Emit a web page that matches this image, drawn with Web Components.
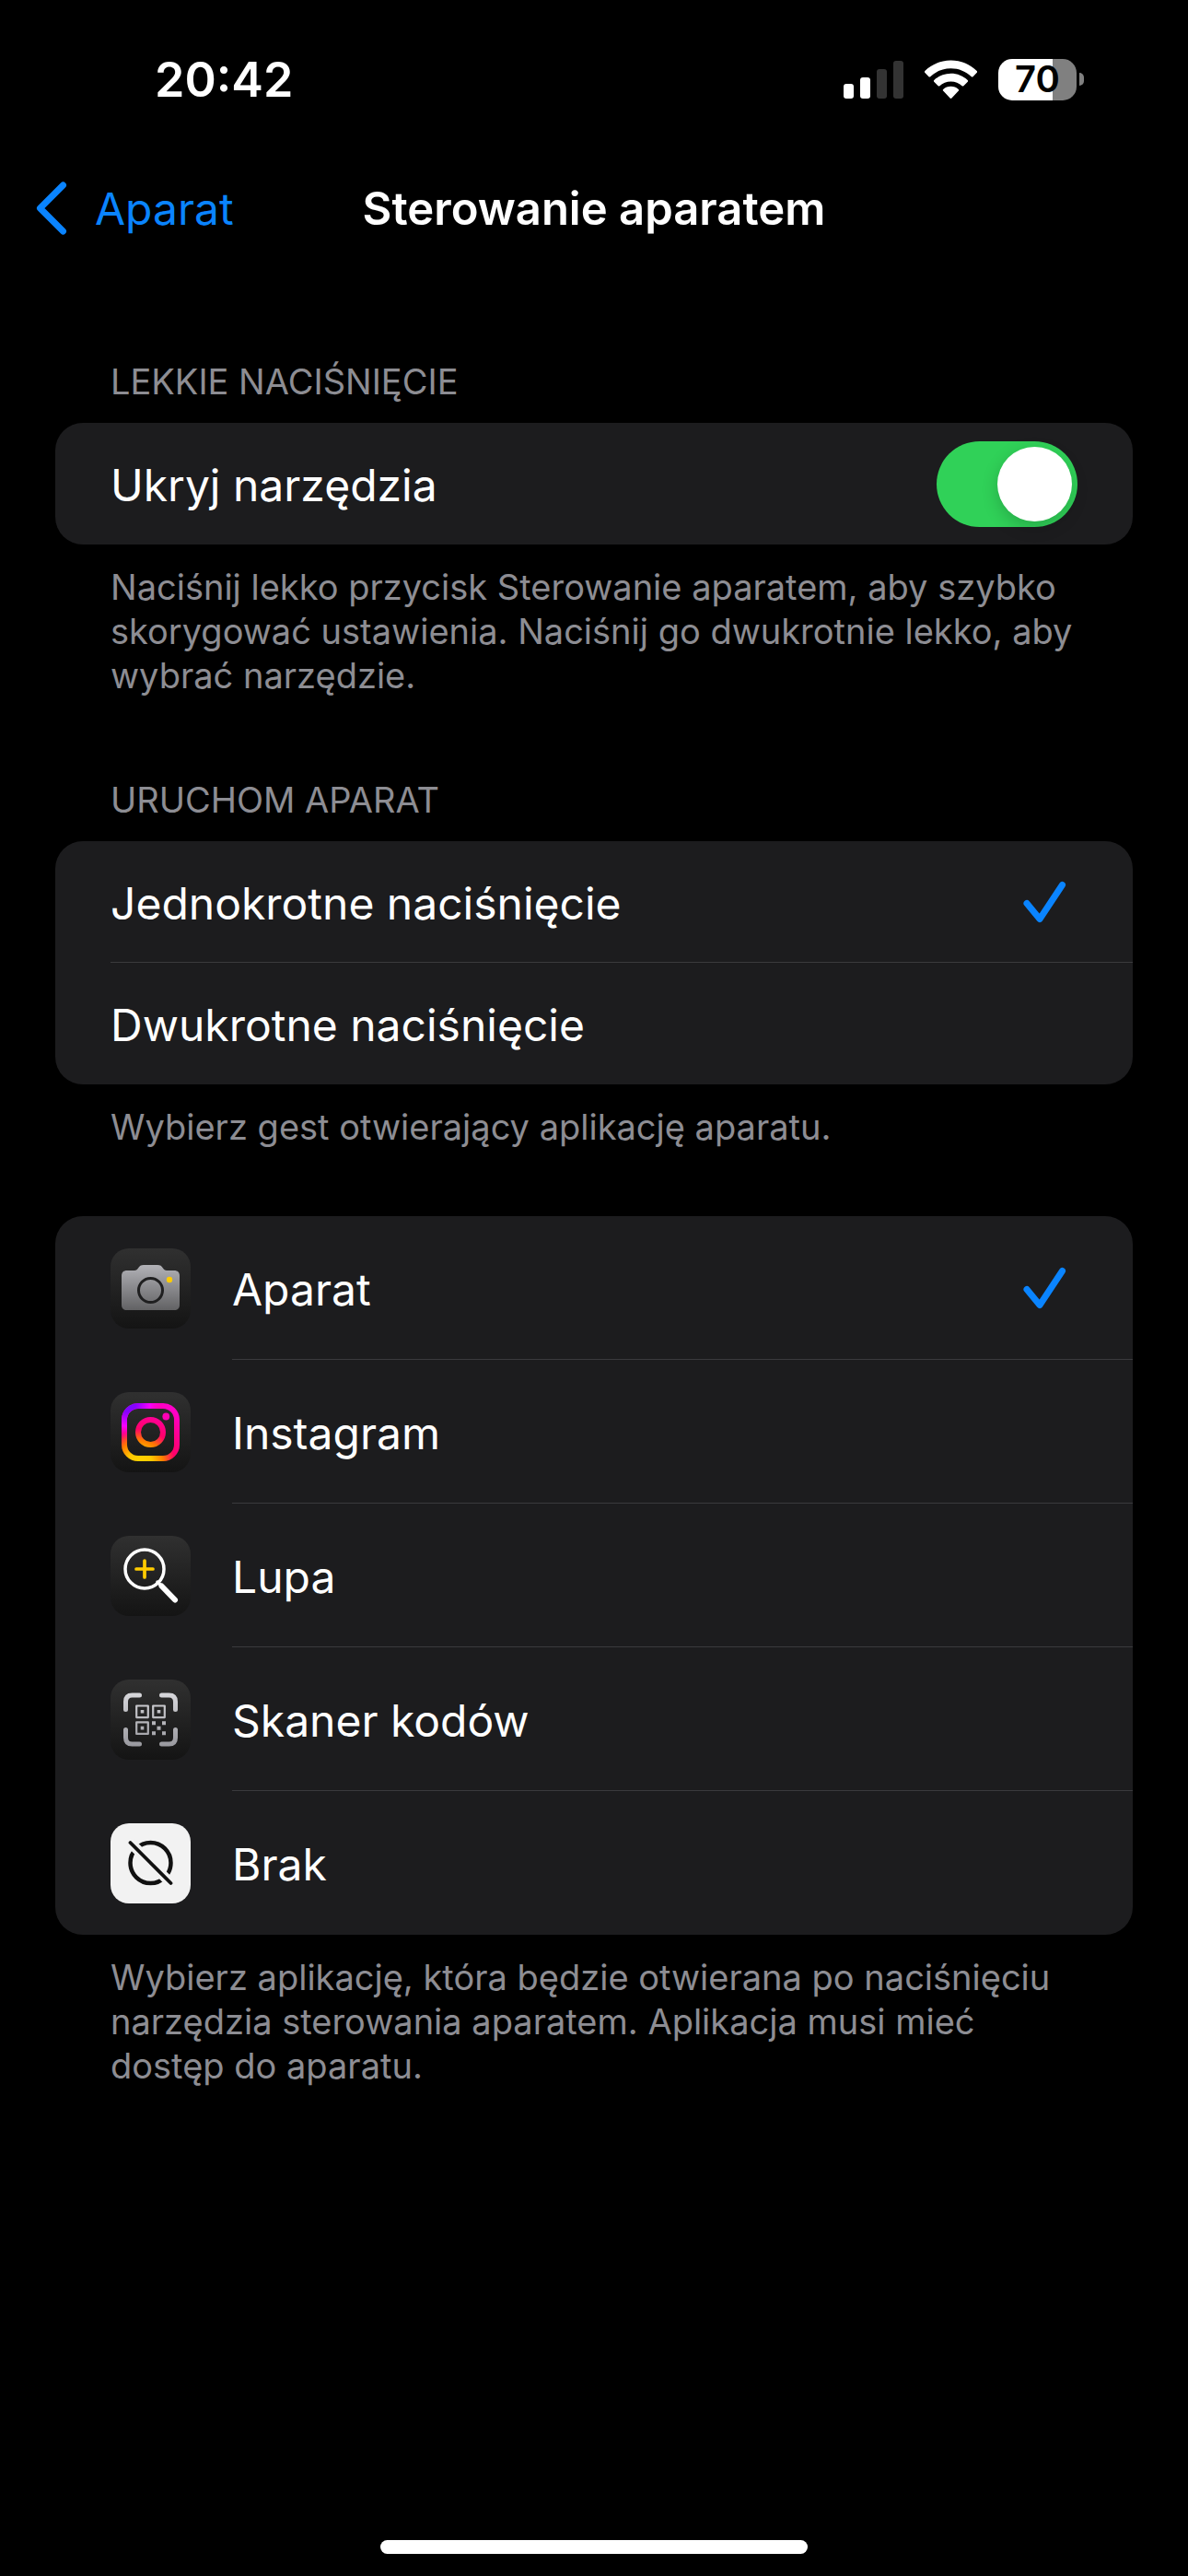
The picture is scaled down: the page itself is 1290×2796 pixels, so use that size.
<!DOCTYPE html>
<html lang="pl">
<head>
<meta charset="utf-8">
<meta name="viewport" content="width=device-width, initial-scale=1">
<title>Sterowanie aparatem</title>
<style>
    :root {
        --blue: #0a84ff;
        --green: #30d158;
        --card: #1c1c1e;
        --line: #3a3a3d;
        --muted: #8d8d93;
        --edge: 60px;
        --text: 48px;
        --small: 38px;
    }

    body {
        margin: 0;
        background: #000;
        color: #fff;
        font-family: Inter, "Liberation Sans", sans-serif;
        font-size: var(--text);
    }
</style>
</head>
<body>

<settings-screen>
    <status-bar slot="top" time="20:42" battery="70"></status-bar>
    <nav-bar slot="top" back="Aparat">Sterowanie aparatem</nav-bar>

    <settings-group heading="LEKKIE NACIŚNIĘCIE">
        <switch-row checked>Ukryj narzędzia</switch-row>
        <span slot="footer">Naciśnij lekko przycisk Sterowanie aparatem, aby szybko skorygować ustawienia. Naciśnij go dwukrotnie lekko, aby wybrać narzędzie.</span>
    </settings-group>

    <settings-group heading="URUCHOM APARAT">
        <choice-row checked>Jednokrotne naciśnięcie</choice-row>
        <choice-row>Dwukrotne naciśnięcie</choice-row>
        <span slot="footer">Wybierz gest otwierający aplikację aparatu.</span>
    </settings-group>

    <settings-group>
        <choice-row checked><app-icon slot="icon" name="camera"></app-icon>Aparat</choice-row>
        <choice-row><app-icon slot="icon" name="instagram"></app-icon>Instagram</choice-row>
        <choice-row><app-icon slot="icon" name="magnifier"></app-icon>Lupa</choice-row>
        <choice-row><app-icon slot="icon" name="scanner"></app-icon>Skaner kodów</choice-row>
        <choice-row><app-icon slot="icon" name="none"></app-icon>Brak</choice-row>
        <span slot="footer">Wybierz aplikację, która będzie otwierana po naciśnięciu narzędzia sterowania aparatem. Aplikacja musi mieć dostęp do aparatu.</span>
    </settings-group>
</settings-screen>

<script>
    class SettingsScreen extends HTMLElement {
        constructor() {
            super();
            this.attachShadow({ mode: 'open' });
        }

        connectedCallback() {
            this.shadowRoot.innerHTML = `
            <style>
                :host {
                    display: flex;
                    flex-direction: column;
                    min-height: 100vh;
                }

                main {
                    display: flex;
                    flex-direction: column;
                    gap: 73px;
                    padding: 98px var(--edge) 60px;
                }

                .home {
                    width: 36%;
                    height: 15px;
                    margin: auto auto 24px;
                    border-radius: 8px;
                    background: #fff;
                }
            </style>
            <slot name="top"></slot>
            <main><slot></slot></main>
            <div class="home"></div>`;
        }
    }

    class StatusBar extends HTMLElement {
        constructor() {
            super();
            this.attachShadow({ mode: 'open' });
        }

        connectedCallback() {
            const level = this.getAttribute('battery');
            this.shadowRoot.innerHTML = `
            <style>
                :host {
                    display: flex;
                    justify-content: space-between;
                    align-items: center;
                    height: 174px;
                    padding: 0 113px 2px 168px;
                    box-sizing: border-box;
                    font-weight: 600;
                    font-size: 52px;
                }

                .icons {
                    display: flex;
                    align-items: center;
                    gap: 23px;
                }

                svg {
                    display: block;
                }

                .battery {
                    display: flex;
                    align-items: center;
                    gap: 3px;
                }

                .cell {
                    display: flex;
                    justify-content: center;
                    align-items: center;
                    width: 85px;
                    height: 45px;
                    border-radius: 15px;
                    background: linear-gradient(90deg, #fff ${level}%, #808080 ${level}%);
                    color: #000;
                    font-size: 40px;
                    font-weight: 600;
                    line-height: 1;
                }

                .tip {
                    width: 5px;
                    height: 14px;
                    border-radius: 0 5px 5px 0;
                    background: #808080;
                }
            </style>
            <time>${this.getAttribute('time')}</time>
            <div class="icons">
                <svg width="65" height="43" viewBox="0 0 65 43">
                    <g fill="#fff">
                        <rect x="0" y="26" width="11" height="16" rx="3"/>
                        <rect x="18" y="19" width="11" height="23" rx="3"/>
                    </g>
                    <g fill="#333">
                        <rect x="36" y="10" width="11" height="32" rx="3"/>
                        <rect x="54" y="1" width="11" height="41" rx="3"/>
                    </g>
                </svg>
                <svg width="57" height="43" viewBox="0 0 57 43" fill="#fff">
                    <path d="M28.500 0.500C39.500 0.500 49.500 4.800 56.700 12c.6.6.6 1.200.1 1.800l-4.300 4.400c-.5.5-1.200.5-1.700 0C45 12.600 37.200 9.200 28.500 9.200S12 12.600 6.200 18.200c-.5.5-1.200.5-1.700 0L.2 13.800c-.5-.6-.5-1.200.1-1.800C7.500 4.800 17.500.5 28.500.5Z"/>
                    <path d="M28.500 14.700c7 0 13.400 2.700 18.200 7.200.6.6.6 1.200.1 1.800l-4.500 4.500c-.5.5-1.100.5-1.700 0-3.200-3-7.400-4.800-12.100-4.800s-8.900 1.800-12.100 4.800c-.6.5-1.200.5-1.700 0l-4.500-4.500c-.5-.6-.5-1.200.1-1.800 4.800-4.500 11.200-7.200 18.200-7.200Z"/>
                    <path d="M28.500 28.700c3.200 0 6.100 1.200 8.300 3.200.6.6.6 1.200.1 1.700l-7.500 7.900c-.6.6-1.200.6-1.800 0l-7.500-7.900c-.5-.5-.5-1.100.1-1.700 2.200-2 5.100-3.200 8.300-3.200Z"/>
                </svg>
                <div class="battery">
                    <div class="cell">${level}</div>
                    <div class="tip"></div>
                </div>
            </div>`;
        }
    }

    class NavBar extends HTMLElement {
        constructor() {
            super();
            this.attachShadow({ mode: 'open' });
        }

        connectedCallback() {
            this.shadowRoot.innerHTML = `
            <style>
                :host {
                    display: grid;
                    grid-template-columns: 1fr auto 1fr;
                    align-items: center;
                    height: 104px;
                    padding: 0 38px;
                }

                a {
                    display: flex;
                    align-items: center;
                    gap: 30px;
                    color: var(--blue);
                    text-decoration: none;
                }

                h1 {
                    margin: 0;
                    font-size: 49px;
                    font-weight: 600;
                }
            </style>
            <a href="#">
                <svg width="35" height="60" viewBox="0 0 35 60" fill="none" stroke="currentColor" stroke-width="7" stroke-linecap="round" stroke-linejoin="round">
                    <path d="M30.500 5 L5.500 30 L30.500 55"/>
                </svg>
                <span>${this.getAttribute('back')}</span>
            </a>
            <h1><slot></slot></h1>`;
        }
    }

    class SettingsGroup extends HTMLElement {
        constructor() {
            super();
            this.attachShadow({ mode: 'open' });
        }

        connectedCallback() {
            const heading = this.getAttribute('heading');
            this.shadowRoot.innerHTML = `
            <style>
                :host {
                    display: block;
                }

                h2,
                p {
                    margin: 0;
                    padding: 0 var(--edge);
                    color: var(--muted);
                    font-size: var(--small);
                    font-weight: 400;
                    line-height: 48px;
                }

                h2 {
                    padding-top: 14px;
                    padding-bottom: 21px;
                }

                p {
                    padding-top: 22px;
                }

                .card {
                    border-radius: 30px;
                    background: var(--card);
                    overflow: hidden;
                }
            </style>
            ${heading ? `<h2>${heading}</h2>` : ''}
            <div class="card"><slot></slot></div>
            <p><slot name="footer"></slot></p>`;

            // radios sit in separate shadow roots, so the group keeps one of them checked
            this.addEventListener('pick', (e) => {
                this.querySelectorAll('choice-row').forEach((row) => {
                    row.checked = row === e.target;
                });
            });
        }
    }

    class SwitchRow extends HTMLElement {
        constructor() {
            super();
            this.attachShadow({ mode: 'open' });
        }

        connectedCallback() {
            this.shadowRoot.innerHTML = `
            <style>
                :host {
                    display: block;
                }

                label {
                    display: flex;
                    justify-content: space-between;
                    align-items: center;
                    min-height: 132px;
                    padding: 0 var(--edge);
                }

                .text {
                    padding-top: 3px;
                }

                input {
                    appearance: none;
                    flex: none;
                    width: 153px;
                    height: 93px;
                    margin: 0;
                    padding: 6px;
                    box-sizing: border-box;
                    border-radius: 47px;
                    background: #39393d;
                }

                input::before {
                    content: "";
                    display: block;
                    width: 81px;
                    height: 81px;
                    border-radius: 50%;
                    background: #fff;
                    box-shadow: 0 6px 18px #00000030;
                }

                input:checked {
                    background: var(--green);
                }

                input:checked::before {
                    margin-left: auto;
                }
            </style>
            <label>
                <span class="text"><slot></slot></span>
                <input type="checkbox" role="switch" ${this.hasAttribute('checked') ? 'checked' : ''}>
            </label>`;
        }
    }

    class ChoiceRow extends HTMLElement {
        constructor() {
            super();
            this.attachShadow({ mode: 'open' });
        }

        set checked(value) {
            this.shadowRoot.querySelector('input').checked = value;
        }

        connectedCallback() {
            const icon = this.querySelector('[slot=icon]');
            this.shadowRoot.innerHTML = `
            <style>
                :host {
                    display: block;
                }

                label {
                    display: flex;
                    gap: 45px;
                    align-items: center;
                    padding-left: var(--edge);
                }

                .body {
                    flex: 1;
                    display: flex;
                    justify-content: space-between;
                    align-items: center;
                    box-sizing: border-box;
                    min-height: ${icon ? 156 : 132}px;
                    padding-right: 72px;
                    border-bottom: 1px solid var(--line);
                }

                .text {
                    padding-top: 3px;
                }

                :host(:nth-last-child(2)) .body {
                    border-color: transparent;
                }

                input {
                    position: absolute;
                    opacity: 0;
                }

                svg {
                    display: none;
                }

                input:checked + svg {
                    display: block;
                }
            </style>
            <label>
                <slot name="icon"></slot>
                <span class="body">
                    <span class="text"><slot></slot></span>
                    <input type="radio" ${this.hasAttribute('checked') ? 'checked' : ''}>
                    <svg width="48" height="48" viewBox="0 0 48 48" fill="none" stroke="#0a84ff" stroke-width="7" stroke-linecap="round" stroke-linejoin="round">
                        <path d="M5 25.500 L19 42.500 L43.500 5.500"/>
                    </svg>
                </span>
            </label>`;
            this.shadowRoot.querySelector('input').addEventListener('change', () => {
                this.dispatchEvent(new Event('pick', { bubbles: true }));
            });
        }
    }

    const drawings = {
        camera: `
            <linearGradient id="body" x1="0" y1="0" x2="0" y2="1">
                <stop offset="0" stop-color="#b2b2b7"/>
                <stop offset="1" stop-color="#626264"/>
            </linearGradient>
            <path fill="url(#body)" d="M18 24h8c2 0 3-1 4-2.500 1.500-2.500 3-3.500 6-3.500h15c3 0 4.500 1 6 3.500 1 1.500 2 2.500 4 2.500h8c4 0 6 2 6 6v31c0 4-2 6-6 6H18c-4 0-6-2-6-6V30c0-4 2-6 6-6Z"/>
            <circle cx="43.500" cy="45.500" r="13" fill="none" stroke="#1f1f20" stroke-width="3"/>
            <circle cx="64" cy="34" r="3.200" fill="#ffcc00"/>`,
        instagram: `
            <radialGradient id="warm" gradientUnits="userSpaceOnUse" cx="32" cy="78" r="68">
                <stop offset="0" stop-color="#ffd600"/>
                <stop offset=".2" stop-color="#ffc800"/>
                <stop offset=".38" stop-color="#ff7a00"/>
                <stop offset=".56" stop-color="#ff0069"/>
                <stop offset="1" stop-color="#ff00c8"/>
            </radialGradient>
            <radialGradient id="cold" gradientUnits="userSpaceOnUse" cx="18" cy="12" r="40">
                <stop offset="0" stop-color="#6a10ff"/>
                <stop offset=".25" stop-color="#8a00ff"/>
                <stop offset=".62" stop-color="#f800ff"/>
                <stop offset="1" stop-color="#ff00a0" stop-opacity="0"/>
            </radialGradient>
            <g fill="none" stroke="url(#warm)" stroke-width="6">
                <rect x="15" y="15" width="57" height="57" rx="15"/>
                <circle cx="43.500" cy="43.500" r="13.500"/>
                <circle cx="60.300" cy="26.500" r="3.900" fill="#ff00b4" stroke="none"/>
            </g>
            <g fill="none" stroke="url(#cold)" stroke-width="6">
                <rect x="15" y="15" width="57" height="57" rx="15"/>
            </g>`,
        magnifier: `
            <g fill="none" stroke="#fff" stroke-linecap="round">
                <circle cx="37" cy="36" r="21" stroke-width="3.500"/>
                <path stroke-width="3.500" d="M51 50l4 4"/>
                <path stroke-width="6" d="M55.500 54.500L70 69.500"/>
            </g>
            <path fill="none" stroke="#ffcc00" stroke-width="3.700" stroke-linecap="round" d="M37 27v18M28 36h18"/>`,
        scanner: `
            <linearGradient id="code" gradientUnits="userSpaceOnUse" x1="0" y1="14" x2="0" y2="73">
                <stop offset="0" stop-color="#d8d8dc"/>
                <stop offset="1" stop-color="#98989e"/>
            </linearGradient>
            <path fill="none" stroke="url(#code)" stroke-width="5" stroke-linecap="round" d="M16.500 32.500V24q0-7 7-7h8M55.500 17h8q7 0 7 7v8.500M70.500 54.500V63q0 7-7 7h-8M31.500 70h-8q-7 0-7-7v-8.500"/>
            <path fill="none" stroke="url(#code)" stroke-width="2.200" stroke-linejoin="round" d="M28.200 28.500h12.600v12.600H28.200ZM46.200 28.500h12.600v12.600H46.200ZM28.200 46.300h12.600v12.600H28.200Z"/>
            <path fill="url(#code)" d="M32.700 33h3.600v3.600h-3.600ZM50.700 33h3.600v3.600h-3.600ZM32.700 50.800h3.600v3.600h-3.600ZM45 45.200h4v4h-4ZM56 45.200h4v4h-4ZM50.500 50.700h4v4h-4ZM45 56.200h4v4h-4ZM56 56.200h4v4h-4Z"/>`,
        none: `
            <circle cx="43.500" cy="43" r="22" fill="none" stroke="#111" stroke-width="4.500"/>
            <path stroke="#f2f2f2" stroke-width="11" d="M21.500 21L65.500 65"/>
            <path stroke="#111" stroke-width="3.800" stroke-linecap="round" d="M21.500 21L65.500 65"/>`
    };

    class AppIcon extends HTMLElement {
        constructor() {
            super();
            this.attachShadow({ mode: 'open' });
        }

        connectedCallback() {
            const name = this.getAttribute('name');
            this.shadowRoot.innerHTML = `
            <style>
                :host {
                    display: block;
                    flex: none;
                    width: 87px;
                    height: 87px;
                    border-radius: 20px;
                    background: ${name === 'none' ? '#f2f2f2' : 'linear-gradient(#303030, #141414)'};
                }

                svg {
                    display: block;
                }
            </style>
            <svg width="87" height="87" viewBox="0 0 87 87" aria-hidden="true">${drawings[name]}</svg>`;
        }
    }

    customElements.define('settings-screen', SettingsScreen);
    customElements.define('status-bar', StatusBar);
    customElements.define('nav-bar', NavBar);
    customElements.define('settings-group', SettingsGroup);
    customElements.define('switch-row', SwitchRow);
    customElements.define('choice-row', ChoiceRow);
    customElements.define('app-icon', AppIcon);
</script>
</body>
</html>
